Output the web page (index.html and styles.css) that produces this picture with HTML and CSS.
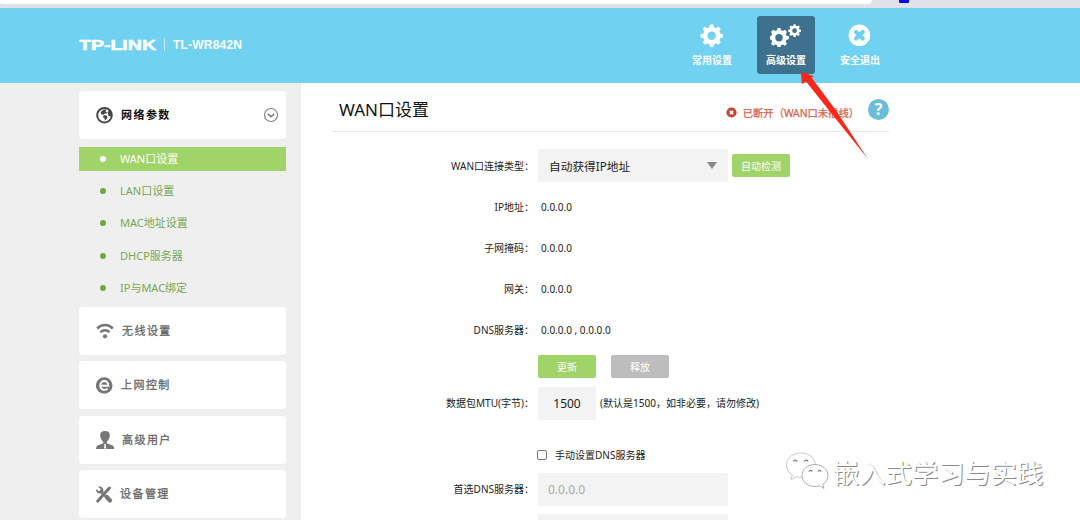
FILE: index.html
```html
<!DOCTYPE html>
<html lang="zh-CN">
<head>
<meta charset="utf-8">
<title>TL-WR842N</title>
<link rel="stylesheet" href="styles.css">
</head>
<body>
<div class="browser"><div class="address"></div><div class="ext"></div></div>
<header class="header">
  <div class="brand">
    <svg class="logo" width="78" height="16" viewBox="0 0 78 16"><text x="0" y="13" textLength="77" lengthAdjust="spacingAndGlyphs">TP-LINK</text></svg>
    <span class="divider"></span>
    <span class="model">TL-WR842N</span>
  </div>
  <nav class="nav">
    <a class="nav-item">
      <svg width="32" height="24" viewBox="0 0 32 24"><use href="#gear" transform="translate(15.700 12.700)"/></svg>
      <span>常用设置</span>
    </a>
    <a class="nav-item active">
      <svg width="32" height="24" viewBox="0 0 32 24"><use href="#gear" transform="translate(9 14.800) scale(.88)"/><use href="#gear" transform="translate(24.600 7.700) scale(.57)"/></svg>
      <span>高级设置</span>
    </a>
    <a class="nav-item">
      <svg width="32" height="24" viewBox="0 0 32 24"><circle cx="15.400" cy="12.300" r="10.800" fill="#fff"/><path d="M12.100 9l6.600 6.600M18.700 9l-6.600 6.600" stroke="#70d1f0" stroke-width="4.200" stroke-linecap="round"/></svg>
      <span>安全退出</span>
    </a>
  </nav>
</header>
<div class="page">
  <aside class="sidebar">
    <div class="card open">
      <svg class="icon" width="18" height="18" viewBox="0 0 18 18"><circle cx="8.500" cy="9.200" r="7.300" fill="#fff" stroke="#454545" stroke-width="2"/><path d="M9.700 3.300L7 4 4.500 6.200l1 2.300 2.200.3 1-1.300 1.800.2.200-1.800-1.500-.3 1-1zM8.500 9.200l-1.600.9.600 1.700 1.200.6.100 2.200 1.500-1.200 1.300-2.100-.9-1.700zM12.700 4.500l-1.300 2 1 2-.3 1.300 2.800.8.900-2.800-1-2.600z" fill="#454545"/></svg>
      <span class="title">网络参数</span>
      <svg class="chevron" width="16" height="16" viewBox="0 0 16 16" fill="none" stroke="#858585"><circle cx="8" cy="8" r="6.500" stroke-width="1.200"/><path d="M4.800 7L8 9.600 11.200 7" stroke-width="1.700"/></svg>
    </div>
    <ul class="submenu">
      <li class="selected">WAN口设置</li>
      <li>LAN口设置</li>
      <li>MAC地址设置</li>
      <li>DHCP服务器</li>
      <li>IP与MAC绑定</li>
    </ul>
    <div class="group">
      <div class="card">
        <svg class="icon" width="18" height="18" viewBox="0 0 18 18" fill="none" stroke="#777"><path d="M1.200 6.500C5.500 1.900 12.500 1.900 16.800 6.500" stroke-width="2.600"/><path d="M4.400 10.300c2.500-2.700 6.700-2.700 9.200 0" stroke-width="2.400"/><circle cx="9" cy="14.300" r="2.100" fill="#777" stroke="none"/></svg>
        <span class="title">无线设置</span>
      </div>
      <div class="card">
        <svg class="icon" width="18" height="18" viewBox="0 0 18 18"><circle cx="8.200" cy="9.500" r="8.300" fill="#777"/><path d="M4.300 9.700h8C12.300 3.400 4.300 3.600 4.300 9.600c0 4.800 4.600 5 7.300 3.100" fill="none" stroke="#fff" stroke-width="1.900"/></svg>
        <span class="title shift-1">上网控制</span>
      </div>
      <div class="card">
        <svg class="icon" width="18" height="20" viewBox="0 0 18 20"><path d="M9 1c-3.900 0-5.200 2-4.700 5.200.4 2.500 1.500 4.400 2.900 5.500v1.500L1.500 15.500Q0 16.300 0 19h18.200q0-2.700-1.500-3.500l-5.900-2.300v-1.500c1.400-1.100 2.500-3 2.900-5.500C14.200 3 12.900 1 9 1z" fill="#777"/><path d="M8 18.500l.5-3-.4-1.500H10l-.3 1.500.6 3z" fill="#fff"/></svg>
        <span class="title">高级用户</span>
      </div>
      <div class="card">
        <svg class="icon" width="18" height="18" viewBox="0 0 18 18"><path d="M1.800 16.100L12.800 3.500" stroke="#777" stroke-width="3" stroke-linecap="round"/><path d="M13.200 1.600l2 .9-2.700 3.900-2.200-1.600z" fill="#777"/><path d="M5 7l8.700 8.500" stroke="#777" stroke-width="2"/><path d="M10.800 12l3.200 3.500" stroke="#777" stroke-width="4.200" stroke-linecap="round"/><path d="M2 1.700l3 2.600-1.900 2-3-2.400C-.2 7 2.200 9.300 5.100 8.300l2.400-1.500C7.800 3 5.500.8 2 1.700z" fill="#777"/></svg>
        <span class="title shift-2">设备管理</span>
      </div>
    </div>
  </aside>
  <main class="main">
    <div class="heading">
      <h1>WAN口设置</h1>
      <div class="status">
        <svg width="11" height="11" viewBox="0 0 11 11"><circle cx="5.500" cy="5.500" r="5.100" fill="#cb4330"/><path d="M3.800 3.800l3.400 3.400M7.200 3.800L3.800 7.200" stroke="#fff" stroke-width="1.700"/></svg>
        <span>已断开（WAN口未插线）</span>
      </div>
      <div class="help">?</div>
    </div>
    <form class="form">
      <div class="row"><label>WAN口连接类型：</label><div class="select">自动获得IP地址<i class="caret"></i></div><button type="button" class="btn detect">自动检测</button></div>
      <div class="row"><label>IP地址：</label><span class="value">0.0.0.0</span></div>
      <div class="row"><label>子网掩码：</label><span class="value">0.0.0.0</span></div>
      <div class="row"><label>网关：</label><span class="value">0.0.0.0</span></div>
      <div class="row"><label>DNS服务器：</label><span class="value">0.0.0.0 , 0.0.0.0</span></div>
      <div class="row actions"><label></label><button type="button" class="btn">更新</button><button type="button" class="btn disabled">释放</button></div>
      <div class="row mtu"><label>数据包MTU(字节)：</label><div class="number">1500</div><span class="note">(默认是1500，如非必要，请勿修改)</span></div>
      <div class="row manual"><label></label><i class="check"></i><span>手动设置DNS服务器</span></div>
      <div class="row dns"><label>首选DNS服务器：</label><div class="input">0.0.0.0</div></div>
      <div class="row dns"><label></label><div class="input"></div></div>
    </form>
  </main>
</div>
<svg class="arrow" width="70" height="90" viewBox="0 0 70 90"><path d="M1 1.700L1.800 14l4.200-2.500L67.700 88.700 36 40.500 11.500 7.500l2.500-1.300z" fill="#fb2619"/></svg>
<div class="watermark">
  <svg width="46" height="40" viewBox="0 0 46 40" fill="#fff" stroke="#999" stroke-width=".8">
    <path class="bubble-back" d="M15.500 1C7.500 1 1.500 6.300 1.500 13c0 4.200 2.200 7.600 5.800 9.900L6 27.500l5.200-2.800c1.800.6 3.400.6 5.300.6 7.800 0 14-5.300 14-12.300S23.500 1 15.500 1z"/>
    <path d="M30 12.500c-7.200 0-13 4.800-13 11s5.800 11 13 11c1.600 0 3.200-.2 4.600-.7l4.400 2.600-1.200-4C41 30.300 43 27.200 43 23.500c0-6.200-5.800-11-13-11z"/>
    <path d="M8.500 9.500a1.900 1.900 0 0 1 3.600 0M19.500 9.500a1.900 1.900 0 0 1 3.600 0M24 19.600a1.700 1.700 0 0 1 3.200 0M33 19.600a1.700 1.700 0 0 1 3.200 0" fill="none" stroke="#777" stroke-width="1.200"/>
  </svg>
  <span>嵌入式学习与实践</span>
</div>
<svg width="0" height="0" class="defs"><defs>
  <g id="gear"><circle r="6.500" fill="none" stroke="#fff" stroke-width="4.600"/><g fill="#fff"><path id="tooth" d="M-2.500-7.500L-1.700-11.200H1.700L2.500-7.500z"/><use href="#tooth" transform="rotate(45)"/><use href="#tooth" transform="rotate(90)"/><use href="#tooth" transform="rotate(135)"/><use href="#tooth" transform="rotate(180)"/><use href="#tooth" transform="rotate(225)"/><use href="#tooth" transform="rotate(270)"/><use href="#tooth" transform="rotate(315)"/></g></g>
</defs></svg>
</body>
</html>
```
FILE: styles.css
```css
* { box-sizing: border-box; }
html { overflow: hidden; }
body { margin: 0; height: 520px; overflow: hidden; background: #fff; color: #222; font: 10px/16px "Noto Sans", "Noto Sans CJK SC", sans-serif; white-space: nowrap; }
svg { flex: none; }
.defs { position: absolute; }
.browser { height: 8px; background: #dfe2e7; display: flex; }
.address { width: 872px; height: 4px; background: #fff; border-radius: 0 0 7px 4px; }
.ext { width: 10px; height: 3px; margin-left: 27px; background: #0b08f5; border-radius: 0 0 1px 1px; }
.header { height: 75px; padding-left: 79px; background: #70d1f0; display: flex; color: #fff; }
.brand { display: flex; align-items: center; height: 73px; width: 605px; }
.logo text { font: bold 14.500px "Liberation Sans", sans-serif; fill: #fff; stroke: #fff; stroke-width: .5px; }
.divider { width: 1px; height: 13px; background: #c6edfa; margin: 0 8px 0 7px; }
.model { font: bold 12px/16px "Liberation Sans", sans-serif; letter-spacing: .2px; }
.nav { display: flex; gap: 16px; padding-top: 8px; margin-left: -1px; }
.nav-item { width: 58px; height: 58px; padding-top: 7px; border-radius: 3px; display: flex; flex-direction: column; align-items: center; font-weight: bold; }
.nav-item span { margin-top: 5px; }
.active { background: #3d718d; }
.page { display: flex; height: 437px; overflow: hidden; }
.sidebar { width: 301px; background: #efefef; padding: 8px 15px 0 79px; }
.card { height: 48px; border-radius: 4px; background: #fff; display: flex; align-items: center; padding-left: 17px; color: #696969; }
.title { margin: 0 auto 0 8px; font-size: 11px; letter-spacing: 1.450px; -webkit-text-stroke: .3px; }
.open .title { margin-left: 7px; color: #111; font-weight: bold; -webkit-text-stroke: 0; }
.card .shift-1 { margin-left: 7px; }
.card .shift-2 { margin-left: 6px; }
.chevron { margin: 0 7px 1px 0; }
.submenu { list-style: none; margin: 8px 0 7px; padding: 0; font-size: 11px; color: #77a850; }
.submenu li { height: 24px; margin-bottom: 8.200px; padding-left: 21px; display: flex; align-items: center; gap: 14px; }
.submenu li::before { content: ""; width: 6px; height: 6px; border-radius: 50%; background: #72a642; }
.submenu .selected { background: #a0d468; color: #fff; }
.submenu .selected::before { background: #fff; }
.submenu li:last-child { margin-bottom: 0; }
.group { display: flex; flex-direction: column; gap: 6.500px; }
.main { padding-left: 31px; }
.heading { display: flex; width: 557px; height: 49px; border-bottom: 1px solid #e8e8e8; padding-left: 7px; align-items: center; }
.heading h1 { font-size: 17px; line-height: 24px; font-weight: 400; margin: 5px auto 0 0; color: #111; }
.status { display: flex; gap: 6px; align-items: center; margin: 11px 9px 0 0; color: #d4644e; font-size: 10.300px; -webkit-text-stroke: .25px; }
.help { width: 21px; height: 21px; border-radius: 50%; background: #6bbcd9; color: #fff; font: bold 16px/21px "Noto Sans", sans-serif; text-align: center; margin-top: 5px; }
.form { padding-top: 13px; }
.row { display: flex; align-items: center; height: 41.200px; }
.row label { width: 202px; margin-right: 4px; text-align: right; }
.value { margin-left: 3px; }
.select { width: 190px; height: 33px; background: #f3f3f3; border-radius: 2px; padding: 0 11px; display: flex; align-items: center; justify-content: space-between; font-size: 11.700px; }
.caret { border: 5px solid transparent; border-top: 7px solid #888; border-bottom: 0; }
.btn { width: 58px; height: 23px; padding: 0; border: 0; border-radius: 2px; background: #a0d468; color: #fff; font: inherit; margin-right: 15px; }
.detect { margin-left: 4px; }
.disabled { background: #bdbdbd; }
.actions { height: 32px; }
.mtu { height: 41px; }
.number { width: 58px; height: 33px; background: #f3f3f3; border-radius: 2px; font-size: 12px; line-height: 33px; text-align: center; }
.note { margin-left: 4px; }
.manual { height: 62px; padding-top: 1px; }
.check { width: 10px; height: 10px; border: 1px solid #777; border-radius: 2px; margin: 0 8px 0 -1px; }
.dns { height: 33px; margin: -13px 0 21px; }
.input { width: 190px; height: 33px; background: #f3f3f3; border-radius: 2px; padding-left: 10px; font-size: 12px; line-height: 33px; color: #aaa; }
.arrow { position: absolute; left: 800px; top: 70px; }
.watermark { position: absolute; left: 785px; top: 452px; display: flex; align-items: center; }
.watermark span { margin-left: 2px; font: 26.300px/40px "Noto Sans CJK SC", sans-serif; color: #fff; text-shadow: 1px 1px .5px #888; }
.bubble-back { stroke: #bbb; }
```
